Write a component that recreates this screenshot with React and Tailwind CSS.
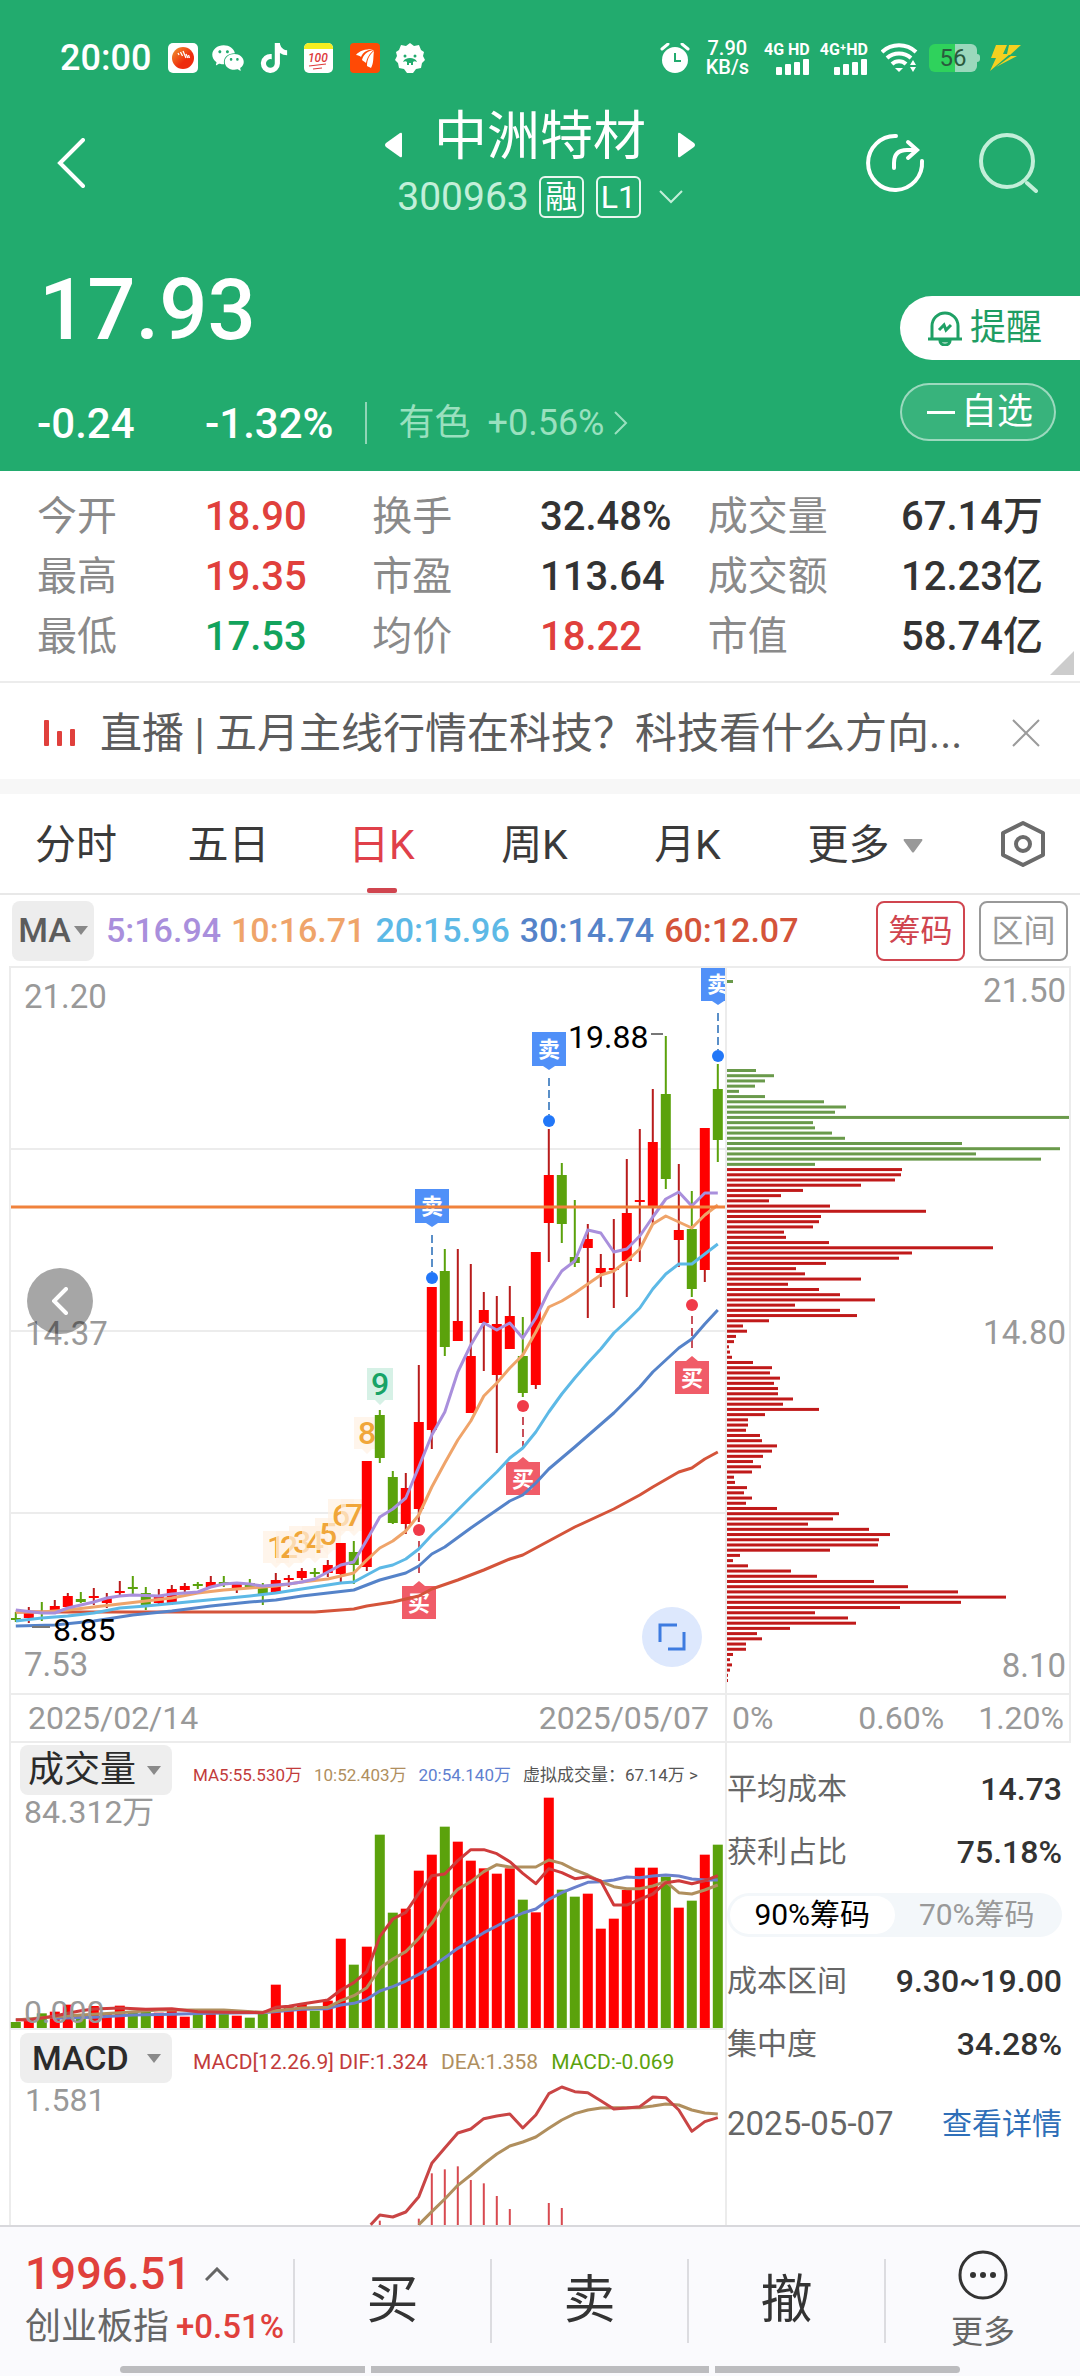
import React, { useState } from "react";
import { AiFillWechat } from "react-icons/ai";
import { FaTiktok } from "react-icons/fa";

const RED = "#ff0000";
const GREEN = "#5ba20c";

// horizontal position of the i-th trading day
const dayX = (i) => 15.8 + i * 13;

// [up, bodyTop, bodyBottom, wickTop, wickBottom]
const candles = [
  [0, 1618, 1620, 1612, 1622],
  [1, 1612, 1618, 1607, 1623],
  [0, 1612, 1614, 1602, 1621],
  [1, 1606, 1613, 1600, 1613],
  [1, 1596, 1607, 1593, 1608],
  [0, 1599, 1602, 1592, 1603],
  [1, 1596, 1598, 1588, 1605],
  [1, 1598, 1603, 1593, 1608],
  [1, 1591, 1593, 1581, 1595],
  [0, 1587, 1589, 1576, 1595],
  [0, 1593, 1605, 1587, 1610],
  [1, 1595, 1603, 1589, 1605],
  [1, 1589, 1603, 1585, 1605],
  [1, 1586, 1590, 1583, 1592],
  [0, 1584, 1586, 1582, 1589],
  [1, 1582, 1587, 1576, 1587],
  [0, 1582, 1584, 1576, 1587],
  [1, 1584, 1589, 1583, 1593],
  [0, 1583, 1587, 1579, 1588],
  [0, 1588, 1594, 1583, 1605],
  [1, 1580, 1592, 1573, 1593],
  [1, 1578, 1580, 1575, 1587],
  [1, 1571, 1578, 1568, 1580],
  [0, 1572, 1574, 1568, 1577],
  [1, 1565, 1573, 1560, 1577],
  [1, 1543, 1574, 1543, 1582],
  [0, 1552, 1565, 1541, 1584],
  [1, 1461, 1567, 1461, 1571],
  [0, 1415, 1458, 1410, 1463],
  [0, 1477, 1523, 1471, 1524],
  [1, 1488, 1524, 1473, 1534],
  [1, 1422, 1509, 1365, 1522],
  [1, 1287, 1430, 1287, 1449],
  [0, 1271, 1347, 1249, 1356],
  [1, 1321, 1341, 1249, 1341],
  [1, 1356, 1413, 1264, 1413],
  [1, 1310, 1323, 1292, 1371],
  [1, 1324, 1375, 1296, 1453],
  [1, 1316, 1349, 1286, 1349],
  [0, 1356, 1393, 1317, 1397],
  [1, 1252, 1385, 1252, 1389],
  [1, 1175, 1223, 1129, 1262],
  [0, 1175, 1224, 1163, 1243],
  [0, 1257, 1263, 1200, 1267],
  [1, 1239, 1248, 1224, 1318],
  [1, 1268, 1273, 1254, 1287],
  [1, 1268, 1270, 1219, 1308],
  [1, 1213, 1261, 1159, 1297],
  [1, 1200, 1202, 1129, 1262],
  [1, 1142, 1206, 1089, 1225],
  [0, 1094, 1179, 1036, 1189],
  [1, 1230, 1240, 1164, 1267],
  [0, 1229, 1289, 1191, 1297],
  [1, 1128, 1270, 1128, 1282],
  [0, 1089, 1140, 1064, 1162],
];

// moving averages, [day, y] pairs
const priceLines = [
  {
    color: "#d4543a",
    pts: [[0, 1612], [23, 1612], [24, 1611], [26, 1609], [27, 1606], [29, 1602], [31, 1596], [32, 1589], [34, 1580], [36, 1570], [38, 1559], [39, 1555], [41, 1541], [43, 1527], [46, 1509], [48, 1495], [49, 1487], [51, 1472], [52, 1468], [53, 1459], [54, 1452]],
  },
  {
    color: "#5583c9",
    pts: [[0, 1626], [3, 1625], [6, 1621], [9, 1615], [12, 1611], [15, 1606], [18, 1602], [20, 1600], [22, 1596], [24, 1593], [26, 1590], [27, 1585], [28, 1580], [30, 1573], [31, 1566], [32, 1554], [33, 1547], [35, 1528], [37, 1510], [38, 1501], [39, 1495], [40, 1483], [41, 1469], [43, 1447], [46, 1413], [48, 1387], [49, 1372], [51, 1348], [52, 1339], [53, 1324], [54, 1310]],
  },
  {
    color: "#5db9e6",
    pts: [[0, 1621], [2, 1618], [4, 1616], [6, 1613], [8, 1608], [10, 1606], [14, 1601], [18, 1596], [20, 1593], [22, 1589], [24, 1585], [25, 1583], [26, 1582], [27, 1575], [28, 1568], [29, 1565], [30, 1559], [31, 1549], [32, 1535], [33, 1523], [35, 1497], [37, 1472], [38, 1458], [39, 1448], [40, 1432], [41, 1412], [42, 1394], [43, 1378], [44, 1363], [45, 1349], [46, 1333], [47, 1321], [48, 1308], [49, 1289], [50, 1274], [51, 1264], [52, 1264], [53, 1254], [54, 1244]],
  },
  {
    color: "#efa46a",
    pts: [[0, 1612], [2, 1612], [4, 1610], [6, 1607], [8, 1604], [10, 1601], [12, 1598], [14, 1593], [16, 1590], [18, 1588], [20, 1586], [22, 1582], [24, 1579], [25, 1576], [26, 1573], [27, 1560], [28, 1548], [29, 1541], [30, 1531], [31, 1515], [32, 1487], [33, 1463], [34, 1440], [35, 1421], [36, 1396], [37, 1383], [38, 1368], [39, 1355], [40, 1332], [41, 1307], [42, 1301], [43, 1293], [44, 1284], [45, 1275], [46, 1271], [47, 1261], [48, 1249], [49, 1224], [50, 1216], [51, 1222], [52, 1228], [53, 1215], [54, 1205]],
  },
  {
    color: "#a98fdc",
    pts: [[0, 1610], [2, 1613], [3, 1613], [4, 1608], [5, 1605], [6, 1602], [7, 1598], [8, 1596], [9, 1595], [11, 1596], [12, 1594], [13, 1593], [14, 1592], [15, 1587], [16, 1584], [17, 1583], [18, 1584], [19, 1586], [20, 1585], [21, 1584], [22, 1582], [23, 1579], [24, 1572], [25, 1565], [26, 1562], [27, 1540], [28, 1517], [29, 1509], [30, 1498], [31, 1467], [32, 1435], [33, 1412], [34, 1372], [35, 1345], [36, 1323], [37, 1330], [38, 1323], [39, 1338], [40, 1318], [41, 1291], [42, 1271], [43, 1261], [44, 1230], [45, 1233], [46, 1252], [47, 1249], [48, 1236], [49, 1217], [50, 1199], [51, 1192], [52, 1206], [53, 1193], [54, 1193]],
  },
];

const sells = [[432, 1278], [549, 1121], [718, 1056]];
const buys = [[419, 1530], [523, 1406], [692, 1305]];

// nine-turn counter, [label, x, top of the tag]
const turns = [
  ["1", 276, 1531],
  ["2", 289, 1531],
  ["3", 302, 1526],
  ["4", 315, 1526],
  ["5", 328, 1518],
  ["6", 341, 1499],
  ["7", 354, 1499],
  ["8", 367, 1417],
];

const chipBars = [
  30, 48, 39, 29, 13, 39, 98, 120, 109, 343, 87, 89, 106, 119, 236, 334, 250,
  315, 89, 176, 175, 169, 135, 77, 55, 43, 104, 200, 95, 93, 87, 58, 60, 103,
  267, 186, 173, 100, 70, 79, 135, 62, 93, 114, 149, 69, 114, 131, 43, 17, 21,
  10, 8, 3, 4, 6, 27, 46, 44, 54, 48, 52, 52, 67, 57, 93, 39, 22, 22, 20, 34,
  36, 51, 46, 37, 27, 35, 26, 8, 9, 21, 18, 26, 20, 51, 113, 107, 82, 143, 164,
  153, 152, 104, 14, 7, 22, 65, 91, 148, 182, 232, 280, 235, 174, 89, 122, 130,
  64, 31, 36, 20, 20, 7, 4, 6, 4, 2, 2,
];

// tops of the volume bars, in thirds of a pixel below the panel's origin
const volumes = [
  876, 866, 850, 845, 824, 858, 828, 850, 827, 846, 846, 848, 842, 860, 852,
  852, 852, 857, 863, 852, 764, 828, 822, 842, 812, 626, 704, 650, 314, 548,
  536, 422, 374, 290, 335, 392, 415, 431, 415, 509, 547, 203, 479, 500, 491,
  596, 566, 480, 413, 413, 440, 533, 512, 374, 344,
];

const volumeLines = [
  {
    color: "#6a80cc",
    pts: [[3, 865], [6, 862], [9, 855], [12, 853], [15, 850], [19, 848], [22, 838], [24, 836], [25, 825], [26, 820], [27, 808], [28, 783], [29, 770], [30, 753], [31, 733], [32, 710], [33, 683], [34, 655], [35, 632], [36, 608], [37, 588], [38, 567], [39, 549], [40, 537], [41, 508], [42, 488], [43, 472], [44, 457], [45, 455], [46, 450], [47, 441], [48, 443], [49, 438], [50, 435], [51, 438], [52, 447], [53, 450], [54, 450]],
  },
  {
    color: "#b08f5e",
    pts: [[0, 870], [3, 860], [5, 855], [8, 848], [11, 840], [16, 840], [19, 847], [20, 842], [21, 838], [22, 834], [24, 832], [25, 812], [26, 797], [27, 773], [28, 715], [29, 687], [30, 665], [31, 625], [32, 580], [33, 520], [34, 478], [35, 455], [36, 425], [37, 404], [38, 411], [40, 411], [41, 390], [42, 400], [43, 420], [44, 435], [45, 455], [46, 470], [47, 476], [48, 476], [49, 468], [50, 455], [51, 488], [52, 492], [53, 480], [54, 465]],
  },
  {
    color: "#cf3b3b",
    pts: [[0, 869], [1, 870], [2, 864], [3, 858], [4, 850], [5, 842], [6, 837], [8, 834], [10, 838], [12, 836], [14, 845], [16, 847], [19, 848], [20, 832], [21, 829], [22, 822], [23, 816], [24, 810], [25, 780], [26, 758], [27, 725], [28, 620], [29, 567], [30, 547], [31, 490], [32, 437], [33, 432], [34, 392], [35, 359], [36, 359], [37, 371], [38, 395], [39, 430], [40, 461], [41, 416], [42, 428], [43, 446], [44, 440], [45, 453], [46, 525], [47, 525], [48, 508], [49, 492], [50, 458], [51, 452], [52, 461], [53, 452], [54, 437]],
  },
];

const macdLines = [
  {
    color: "#b08f5e",
    pts: [[31, 1484], [32, 1445], [33, 1407], [34, 1366], [35, 1335], [36, 1302], [37, 1272], [38, 1248], [39, 1236], [40, 1221], [41, 1195], [42, 1170], [43, 1151], [44, 1140], [45, 1134], [46, 1133], [48, 1133], [49, 1128], [50, 1122], [51, 1125], [52, 1140], [53, 1149], [54, 1152]],
  },
  {
    color: "#c94545",
    pts: [[27.3, 1484], [28, 1455], [29, 1461], [30, 1446], [31, 1400], [32, 1300], [33, 1254], [34, 1209], [35, 1197], [36, 1166], [37, 1158], [38, 1152], [39, 1194], [40, 1155], [41, 1091], [42, 1071], [43, 1085], [44, 1088], [45, 1112], [46, 1137], [47, 1134], [48, 1130], [49, 1101], [50, 1103], [51, 1140], [52, 1204], [53, 1175], [54, 1163]],
  },
];

const macdBars = [[28, 1472], [31, 1466], [32, 1330], [33, 1318], [34, 1309], [35, 1350], [36, 1360], [37, 1398], [38, 1437], [41, 1419], [42, 1434]];

const toPoints = (pts) => pts.map(([i, y]) => `${dayX(i)},${y}`).join(" ");
const toPanelPoints = (pts) =>
  pts.map(([i, y]) => `${dayX(i)},${1730 + y / 3}`).join(" ");

const quote = [
  ["今开", "18.90", "text-[#e0403c]"],
  ["换手", "32.48%", "text-[#333333]"],
  ["成交量", "67.14万", "text-[#333333]"],
  ["最高", "19.35", "text-[#e0403c]"],
  ["市盈", "113.64", "text-[#333333]"],
  ["成交额", "12.23亿", "text-[#333333]"],
  ["最低", "17.53", "text-[#12a35c]"],
  ["均价", "18.22", "text-[#e0403c]"],
  ["市值", "58.74亿", "text-[#333333]"],
];

const Signal = ({ label }) => (
  <div className="flex flex-col items-end text-base leading-[15px] font-bold">
    <span>{label}</span>
    <svg viewBox="0 0 34 16" className="w-[34px] h-[16px] mt-[2px]" fill="#fff">
      <rect x="0" y="8" width="6" height="8" rx="1" />
      <rect x="9" y="5" width="6" height="11" rx="1" />
      <rect x="18" y="3" width="6" height="13" rx="1" />
      <rect x="27" y="0" width="6" height="16" rx="1" />
    </svg>
  </div>
);

const StatusBar = () => (
  <div className="flex items-center justify-between h-[34px] pl-[60px] pr-[58px]">
    <div className="flex items-center">
      <span className="text-4xl leading-[34px] font-medium">20:00</span>
      <svg viewBox="0 0 30 30" className="w-[30px] h-[30px] ml-[17px]">
        <defs>
          <linearGradient id="ball" x1="0" y1="0" x2="1" y2="1">
            <stop offset="0" stopColor="#f09a30" />
            <stop offset="0.6" stopColor="#ee2c0c" />
          </linearGradient>
        </defs>
        <rect width="30" height="30" rx="5" fill="#fff" />
        <circle cx="15" cy="15" r="11" fill="url(#ball)" />
        <path d="M10 10l1 2M12.500 9l2 4M15 8l3 7M18 11l2 4M20.500 12l1 3" stroke="#fff" strokeWidth="1.300" fill="none" />
      </svg>
      <AiFillWechat size={36} className="ml-[12px]" />
      <FaTiktok size={30} className="ml-[13px]" />
      <svg viewBox="0 0 30 30" className="w-[30px] h-[30px] ml-[15px]">
        <rect width="29" height="30" rx="5" fill="#fff" />
        <path d="M0 6V5a5 5 0 0 1 5-5h19a5 5 0 0 1 5 5v1z" fill="#f5ee20" />
        <text x="4" y="19" fontSize="12" fontStyle="italic" fontWeight="500" fill="#dd3a3a">100</text>
        <path d="M5 23l17-2M9 26l9-1" stroke="#dd3a3a" strokeWidth="1.200" />
      </svg>
      <svg viewBox="0 0 30 30" className="w-[30px] h-[30px] ml-[16px]">
        <rect width="30" height="30" rx="4" fill="#ff4a05" />
        <g fill="#fff">
          <path d="M6 12c3-4 9-6 17-6-6 1-10 3-12 8-1-1-3-2-5-2z" />
          <path d="M12 17c1-5 5-9 12-10-5 4-7 8-8 13-1-1-3-2-4-3z" />
          <path d="M17 23c0-6 2-11 7-15-1 6 0 12-3 17-1-1-3-1-4-2z" />
        </g>
      </svg>
      <svg viewBox="0 0 30 30" className="w-[30px] h-[30px] ml-[15px]">
        <path d="M15 0l4 3 5-1 2 5 3 2-1 4 2 4-3 3-1 5-5 1-3 4h-6l-3-4-5-1-1-5-3-3 2-4-1-4 3-2 2-5 5 1z" fill="#fff" />
        <g fill="#22ab6e">
          <circle cx="10" cy="13" r="1.500" />
          <circle cx="20" cy="13" r="1.500" />
          <path d="M8 19c1-3 4-4 7-4s6 1 7 4c-2-1-3-1-4 0v3h-2v-2h-2v2h-2v-3c-1-1-2-1-4 0z" />
        </g>
      </svg>
    </div>
    <div className="flex items-center">
      <svg viewBox="0 0 30 30" className="w-[30px] h-[30px]" fill="none">
        <circle cx="15" cy="17" r="13" fill="#fff" />
        <path d="M2 6l6-5M28 6l-6-5" stroke="#fff" strokeWidth="3" strokeLinecap="round" />
        <path d="M15 10v8h6" stroke="#22ab6e" strokeWidth="2" />
      </svg>
      <div className="ml-[16px] text-center text-xl leading-[19px] font-medium">
        <div>7.90</div>
        <div>KB/s</div>
      </div>
      <div className="flex items-center gap-[10px] ml-[15px]">
        <Signal label="4G HD" />
        <Signal label="4G⁺HD" />
      </div>
      <svg viewBox="0 0 38 30" className="w-[38px] h-[30px] ml-[13px]" fill="none" stroke="#fff" strokeWidth="4">
        <path d="M1 9a25 25 0 0 1 34 0" />
        <path d="M6 15a18 18 0 0 1 24 0" />
        <path d="M11 21a10 10 0 0 1 14 0" />
        <path d="M14 25h8l-4 4z" fill="#fff" stroke="none" />
        <path d="M29 22l3-5 3 5zM29 24l3 5 3-5z" fill="#fff" stroke="none" />
      </svg>
      <div className="flex items-center ml-[10px]">
        <div className="w-[48px] h-[28px] rounded-md bg-linear-to-r from-[#2fd25c] from-55% to-[#9bd8bc] to-55% text-center text-2xl leading-[28px] text-[#2a5a3d]">
          56
        </div>
        <div className="w-[3px] h-[8px] rounded-r bg-[#9bd8bc]" />
      </div>
      <svg viewBox="0 0 32 26" className="w-[32px] h-[26px] ml-[10px]" fill="#f5d020">
        <path d="M6 0h11l-4 9h7L0 26l6-13H1z" />
        <path d="M19 0h12L20 10l-3-1zM21 11h6L6 22z" />
      </svg>
    </div>
  </div>
);

const Header = () => (
  <header className="bg-[#22ab6e] text-white pt-[41px]">
    <StatusBar />
    <div className="grid grid-cols-[1fr_auto_1fr] items-center mt-[28px]">
      <button aria-label="返回" className="justify-self-start pl-[57px]">
        <svg viewBox="0 0 28 50" className="w-[28px] h-[50px]" fill="none" stroke="#fff" strokeWidth="4" strokeLinecap="round">
          <path d="M26 2L3 25l23 23" />
        </svg>
      </button>
      <div className="flex flex-col items-center">
        <div className="flex items-center gap-[32px] h-[68px]">
          <button aria-label="上一只">
            <svg viewBox="0 0 18 26" className="w-[18px] h-[26px] mt-4" fill="#fff">
              <path d="M18 2v22q0 2-2 1L2 15q-2-2 0-4L16 1q2-1 2 1z" />
            </svg>
          </button>
          <h1 className="text-[53px] leading-[68px]">中洲特材</h1>
          <button aria-label="下一只">
            <svg viewBox="0 0 18 26" className="w-[18px] h-[26px] mt-4" fill="#fff">
              <path d="M0 2v22q0 2 2 1l14-10q2-2 0-4L2 1Q0 0 0 2z" />
            </svg>
          </button>
        </div>
        <div className="flex items-center h-[52px] text-[39px]">
          <span className="text-[#c2efd9]">300963</span>
          <span className="ml-[10px] w-[45px] h-[42px] rounded-md border-2 border-white/90 text-center text-[32px] leading-[38px]">融</span>
          <span className="ml-[12px] w-[45px] h-[42px] rounded-md border-2 border-white/90 text-center text-[32px] leading-[38px]">L1</span>
          <svg viewBox="0 0 24 14" className="w-[24px] h-[14px] ml-[18px]" fill="none" stroke="#c2efd9" strokeWidth="2">
            <path d="M1 1l11 11L23 1" />
          </svg>
        </div>
      </div>
      <div className="flex items-center justify-end gap-[53px] pr-[42px]">
        <button aria-label="分享">
          <svg viewBox="0 0 60 60" className="w-[60px] h-[60px]" fill="none" stroke="#fff" strokeWidth="4" strokeLinecap="round">
            <path d="M31 3A27 27 0 1 0 57 28" />
            <path d="M29 35V30q0-13 13-13h9M43 9l9 8-9 8" />
          </svg>
        </button>
        <button aria-label="搜索">
          <svg viewBox="0 0 60 60" className="w-[60px] h-[60px]" fill="none" stroke="#c2efd9" strokeWidth="4" strokeLinecap="round">
            <circle cx="29" cy="28" r="26" />
            <path d="M49 50l9 8" />
          </svg>
        </button>
      </div>
    </div>
    <div className="flex justify-between mt-[32px] pb-[19px]">
      <div>
        <div className="pl-[39px] text-[85px] leading-[110px] font-medium">17.93</div>
        <div className="flex items-center h-[58px] mt-[29px] pl-[37px] text-[42px]">
          <span className="w-[168px] font-medium">-0.24</span>
          <span className="font-medium">-1.32%</span>
          <span className="w-[2px] h-[42px] ml-[32px] bg-white/50" />
          <a href="#sector" className="flex items-center ml-[31px] text-4xl text-[#9ae0bf]">
            有色
            <span className="ml-[17px]">+0.56%</span>
            <svg viewBox="0 0 14 24" className="w-[14px] h-[24px] ml-[10px]" fill="none" stroke="#9ae0bf" strokeWidth="2">
              <path d="M1 1l11 11L1 23" />
            </svg>
          </a>
        </div>
      </div>
      <div className="flex flex-col items-start mt-[41px]">
        <button className="flex items-center w-[180px] h-[64px] pl-[27px] gap-[7px] rounded-l-full bg-white text-[#1f9d63] text-4xl">
          <svg viewBox="0 0 36 36" className="w-[36px] h-[36px]" fill="none" stroke="#1fa065" strokeWidth="3">
            <path d="M5 29V16a13 13 0 0 1 26 0v13M1 29h34" />
            <path d="M13 31a5 4 0 0 0 10 0z" />
            <path d="M12 20l5-5 2 5 5-5" />
          </svg>
          提醒
        </button>
        <button className="flex items-center w-[156px] h-[58px] mt-[23px] pl-[25px] gap-[6px] rounded-full border-2 border-white/50 bg-white/10 text-4xl">
          <span className="w-[28px] h-[3px] bg-white" />
          自选
        </button>
      </div>
    </div>
  </header>
);

const QuoteTable = () => (
  <section className="relative border-b-2 border-[#ececec] pt-[16px] pb-[14px]">
    <dl className="grid grid-cols-3 px-[37px] text-[40px] leading-[60px]">
      {quote.map(([label, value, color], i) => (
        <div key={label} className={i % 3 === 2 ? "flex justify-between" : "flex"}>
          <dt className={i % 3 === 2 ? "text-[#8a8a8a]" : "w-1/2 text-[#8a8a8a]"}>{label}</dt>
          <dd className={`${color} font-medium`}>{value}</dd>
        </div>
      ))}
    </dl>
    <svg viewBox="0 0 24 24" className="absolute right-[6px] bottom-[6px] w-[24px] h-[24px]" fill="#cccccc">
      <path d="M24 0v24H0z" />
    </svg>
  </section>
);

const News = () => (
  <section className="flex items-center h-[96px] pl-[44px] pr-[40px] pt-[4px]">
    <svg viewBox="0 0 32 26" className="w-[32px] h-[26px] shrink-0" fill="#e0403c">
      <rect x="0" y="0" width="5" height="26" rx="1" />
      <rect x="13" y="11" width="5" height="15" rx="1" />
      <rect x="26" y="9" width="5" height="17" rx="1" />
    </svg>
    <a href="#live" className="ml-[24px] flex-1 truncate text-[42px] text-[#5c5c5c]">
      直播 | 五月主线行情在科技？科技看什么方向...
    </a>
    <button aria-label="关闭">
      <svg viewBox="0 0 28 28" className="w-[28px] h-[28px]" stroke="#9b9b9b" strokeWidth="2">
        <path d="M1 1l26 26M27 1L1 27" />
      </svg>
    </button>
  </section>
);

const Tabs = () => {
  const [active, setActive] = useState("日K");

  return (
    <nav className="grid grid-cols-[152fr_153fr_153fr_153fr_153fr_202fr_114fr] h-[101px] border-b-2 border-[#e8e8e8] text-[41px] text-[#3a3a3a]">
      {["分时", "五日", "日K", "周K", "月K"].map((tab) => (
        <button
          key={tab}
          onClick={() => setActive(tab)}
          className={`relative pt-[4px] ${tab === active ? "text-[#e0404a]" : ""}`}
        >
          {tab}
          {tab === active && (
            <span className="absolute bottom-0 left-1/2 -ml-[15px] w-[30px] h-[5px] rounded-xs bg-[#d0454f]" />
          )}
        </button>
      ))}
      <button className="flex items-center justify-center gap-[13px] pt-[4px]">
        更多
        <svg viewBox="0 0 20 14" className="w-[20px] h-[14px]" fill="#999999">
          <path d="M1 0h18q1 1 0 2l-8 11q-1 1-2 0L1 2Q0 1 1 0z" />
        </svg>
      </button>
      <button aria-label="设置" className="flex items-center justify-center">
        <svg viewBox="0 0 46 48" className="w-[46px] h-[48px]" fill="none" stroke="#6b6b6b" strokeWidth="4" strokeLinejoin="round">
          <path d="M23 3l20 10v22L23 45 3 35V13z" />
          <circle cx="23" cy="24" r="7" />
        </svg>
      </button>
    </nav>
  );
};

const Legend = () => (
  <div className="flex items-center h-[71px] px-[12px]">
    <button className="flex items-center justify-center gap-[3px] w-[82px] h-[60px] rounded-lg bg-[#ededed] text-[34px] font-medium text-[#5c5c5c]">
      MA
      <svg viewBox="0 0 14 9" className="w-[14px] h-[9px]" fill="#888888">
        <path d="M0 0h14L7 9z" />
      </svg>
    </button>
    <div className="flex gap-[10px] ml-[12px] text-[34px] font-medium">
      <span className="text-[#a98fdc]">5:16.94</span>
      <span className="text-[#efa46a]">10:16.71</span>
      <span className="text-[#5db9e6]">20:15.96</span>
      <span className="text-[#5583c9]">30:14.74</span>
      <span className="text-[#d4543a]">60:12.07</span>
    </div>
    <button className="ml-auto w-[89px] h-[60px] rounded-lg border-2 border-[#d0454f] text-[32px] text-[#d0454f]">筹码</button>
    <button className="ml-[14px] w-[89px] h-[60px] rounded-lg border-2 border-[#999999] text-[32px] text-[#999999]">区间</button>
  </div>
);

const Sell = ({ x, y }) => (
  <g>
    <path d={`M${x} ${y - 43}V${y - 6}`} stroke="#5a8fc8" strokeWidth="2" strokeDasharray="8 4" />
    <circle cx={x} cy={y} r="6" fill="#2277f8" />
    <path d={`M${x - 17} ${y - 89}h34v34h-11l-6 4-6-4h-11z`} fill="#5090f8" />
    <text x={x} y={y - 64} textAnchor="middle" fontSize="22" fontWeight="700" fill="#fff">卖</text>
  </g>
);

const Buy = ({ x, y }) => (
  <g>
    <path d={`M${x} ${y + 11}v36`} stroke="#c8505a" strokeWidth="2" strokeDasharray="8 4" />
    <circle cx={x} cy={y} r="6" fill="#f03a48" />
    <path d={`M${x - 17} ${y + 56}h11l6-5 6 5h11v33h-34z`} fill="#f05c68" />
    <text x={x} y={y + 81} textAnchor="middle" fontSize="22" fontWeight="700" fill="#fff">买</text>
  </g>
);

const PriceChart = () => (
  <div className="relative border-b-2 border-[#ececec]">
    <svg viewBox="11 968 714 725" className="block w-full">
      <path d="M11 1149H725M11 1331H725M11 1513H725" stroke="#ececec" strokeWidth="2" />
      {turns.map(([label, x, y]) => (
        <g key={label}>
          <path d={`M${x - 13} ${y}h26v32h-8l-5 5-5-5h-8z`} fill="#fff1e3" fillOpacity="0.7" />
          <text x={x} y={y + 27} textAnchor="middle" fontSize="32" fontWeight="500" fill="#f0a63a">{label}</text>
        </g>
      ))}
      <path d="M367 1368h26v32h-8l-5 5-5-5h-8z" fill="#d6f1e6" />
      <text x="380" y="1395" textAnchor="middle" fontSize="32" fontWeight="500" fill="#18a366">9</text>
      {candles.map(([up, top, bottom, high, low], i) => (
        <g key={i} fill={up ? RED : GREEN}>
          <rect x={dayX(i) - 1} y={high} width="2" height={low - high} fill={up ? "#b81c1c" : GREEN} />
          <rect x={dayX(i) - 5} y={top} width="10" height={bottom - top} />
        </g>
      ))}
      {sells.map(([x, y]) => <Sell key={x} x={x} y={y} />)}
      {buys.map(([x, y]) => <Buy key={x} x={x} y={y} />)}
      {priceLines.map(({ color, pts }) => (
        <polyline key={color} points={toPoints(pts)} fill="none" stroke={color} strokeWidth="3" strokeLinejoin="round" />
      ))}
      <path d="M11 1207H725" stroke="#f0823c" strokeWidth="3" />
      <path d="M651 1034h12M32 1627h18" stroke="#777" strokeWidth="2" />
      <g fontSize="33" fill="#999999">
        <text x="24" y="1008">21.20</text>
        <text x="25" y="1345">14.37</text>
        <text x="24" y="1676">7.53</text>
      </g>
      <g fontSize="32" fill="#000">
        <text x="568" y="1048">19.88</text>
        <text x="53" y="1641">8.85</text>
      </g>
    </svg>
    <button aria-label="向前" className="absolute top-[46%] left-[2.3%] -mt-[34px] flex items-center justify-center w-[66px] h-[66px] rounded-full bg-black/35">
      <svg viewBox="0 0 16 28" className="w-[16px] h-[28px]" fill="none" stroke="#fff" strokeWidth="4" strokeLinecap="round">
        <path d="M14 2L2 14l12 12" />
      </svg>
    </button>
    <button aria-label="全屏" className="absolute right-[3.2%] bottom-[3.6%] flex items-center justify-center w-[60px] h-[60px] rounded-full bg-[#dde8fd]">
      <svg viewBox="0 0 28 28" className="w-[28px] h-[28px]" fill="none" stroke="#3d7be0" strokeWidth="3">
        <path d="M2 19V2h17M10 26h16V9" />
      </svg>
    </button>
  </div>
);

const ChipChart = () => (
  <svg viewBox="727 968 342 725" preserveAspectRatio="none" className="block w-full">
    <rect x="727" y="980" width="6" height="3" fill="#6a9a4b" />
    {chipBars.map((w, i) => (
      <rect key={i} x="727" y={1069 + i * 5.214} width={w - 1} height="3" fill={i < 19 ? "#6a9a4b" : "#c01a1a"} />
    ))}
    <g fontSize="33" fill="#999999" textAnchor="end">
      <text x="1066" y="1002">21.50</text>
      <text x="1066" y="1344">14.80</text>
      <text x="1066" y="1677">8.10</text>
    </g>
  </svg>
);

const PanelButton = ({ children }) => (
  <button className="flex items-center justify-between w-[152px] h-[50px] pl-[8px] pr-[11px] rounded-lg bg-[#eeeeee] text-[#2b2b2b]">
    {children}
    <svg viewBox="0 0 14 9" className="w-[14px] h-[9px]" fill="#8a8a8a">
      <path d="M0 0h14L7 9z" />
    </svg>
  </button>
);

const VolumePanel = () => (
  <section>
    <div className="flex items-center h-[54px] pl-[9px]">
      <PanelButton>
        <span className="text-4xl leading-[50px]">成交量</span>
      </PanelButton>
      <div className="flex items-center gap-[12px] ml-[21px] pt-[12px] text-[17px] whitespace-nowrap">
        <span className="text-[#c23b3b]">MA5:55.530万</span>
        <span className="text-[#b08f5e]">10:52.403万</span>
        <span className="text-[#5f7fd0]">20:54.140万</span>
        <a href="#volume" className="text-[#555555]">虚拟成交量：67.14万 &gt;</a>
      </div>
    </div>
    <svg viewBox="11 1797 714 233" className="block w-full overflow-visible">
      {volumes.map((top, i) => (
        <rect key={i} x={dayX(i) - 5} y={1730 + top / 3} width="10" height={(895 - top) / 3} fill={candles[i][0] ? RED : GREEN} />
      ))}
      {volumeLines.map(({ color, pts }) => (
        <polyline key={color} points={toPanelPoints(pts)} fill="none" stroke={color} strokeWidth="3" strokeLinejoin="round" />
      ))}
      <path d="M11 2029H725" stroke="#ececec" strokeWidth="2" />
      <g fontSize="32" fill="#999999">
        <text x="24" y="1823">84.312万</text>
        <text x="24" y="2023">0.000</text>
      </g>
    </svg>
  </section>
);

const MacdPanel = () => (
  <section>
    <div className="flex items-center h-[56px] pl-[9px]">
      <PanelButton>
        <span className="pl-[4px] text-[34px] leading-[50px] font-medium">MACD</span>
      </PanelButton>
      <div className="flex items-center gap-[13px] ml-[21px] pt-[10px] text-[21px] whitespace-nowrap">
        <span className="text-[#c23b3b]">MACD[12.26.9] DIF:1.324</span>
        <span className="text-[#b08f5e]">DEA:1.358</span>
        <span className="text-[#5ba20c]">MACD:-0.069</span>
      </div>
    </div>
    <svg viewBox="11 2086 714 139" className="block w-full overflow-visible">
      {macdBars.map(([i, top]) => (
        <rect key={i} x={dayX(i) - 1} y={1730 + top / 3} width="2" height={2225 - (1730 + top / 3)} fill="#d84a50" />
      ))}
      {macdLines.map(({ color, pts }) => (
        <polyline key={color} points={toPanelPoints(pts)} fill="none" stroke={color} strokeWidth="3" strokeLinejoin="round" />
      ))}
      <text x="25" y="2111" fontSize="32" fill="#999999">1.581</text>
    </svg>
  </section>
);

const ChipRow = ({ label, value }) => (
  <div className="flex items-center justify-between h-[63px]">
    <dt className="text-3xl text-[#666666]">{label}</dt>
    <dd className="text-[32px] font-medium text-[#333333]">{value}</dd>
  </div>
);

const ChipInfo = () => {
  const [range, setRange] = useState("90%筹码");

  return (
    <section className="pt-[14px] pr-[9px]">
      <dl>
        <ChipRow label="平均成本" value="14.73" />
        <ChipRow label="获利占比" value="75.18%" />
      </dl>
      <div className="flex h-[44px] mt-[10px] mb-[12px] p-[3px] rounded-full bg-[#f3f7fa]">
        {["90%筹码", "70%筹码"].map((item) => (
          <button
            key={item}
            onClick={() => setRange(item)}
            className={`flex-1 rounded-full text-3xl leading-[38px] ${
              item === range ? "bg-white text-black" : "text-[#999999]"
            }`}
          >
            {item}
          </button>
        ))}
      </div>
      <dl>
        <ChipRow label="成本区间" value="9.30~19.00" />
        <ChipRow label="集中度" value="34.28%" />
      </dl>
      <div className="flex items-center justify-between h-[63px] mt-[17px]">
        <span className="text-[33px] text-[#666666]">2025-05-07</span>
        <a href="#detail" className="text-3xl text-[#2f6fb8]">查看详情</a>
      </div>
    </section>
  );
};

const BottomBar = () => (
  <footer className="border-t-2 border-[#d8d8dc] bg-[#fafafd]">
    <div className="grid grid-cols-[295fr_197fr_197fr_197fr_194fr] items-center h-[139px] pt-[9px]">
      <a href="#index" className="block pl-[25px] border-r-2 border-[#dcdce0] h-[84px]">
        <div className="flex items-center text-[45px] leading-[30px] font-medium text-[#e0403c]">
          1996.51
          <svg viewBox="0 0 24 14" className="w-[24px] h-[14px] ml-[14px]" fill="none" stroke="#666666" strokeWidth="3">
            <path d="M1 13L12 2l11 11" />
          </svg>
        </div>
        <div className="flex items-center mt-[20px] text-[36px] leading-[36px] text-[#666666] whitespace-nowrap">
          创业板指
          <span className="ml-[7px] text-[33px] font-medium text-[#e0403c]">+0.51%</span>
        </div>
      </a>
      <button className="h-[84px] border-r-2 border-[#dcdce0] text-[52px] leading-[84px] text-[#333333]">买</button>
      <button className="h-[84px] border-r-2 border-[#dcdce0] text-[52px] leading-[84px] text-[#333333]">卖</button>
      <button className="h-[84px] border-r-2 border-[#dcdce0] text-[52px] leading-[84px] text-[#333333]">撤</button>
      <button className="flex flex-col items-center text-[32px] leading-[40px] text-[#666666]">
        <svg viewBox="0 0 50 50" className="w-[50px] h-[50px] mb-[12px]" fill="none" stroke="#333333" strokeWidth="3">
          <circle cx="25" cy="25" r="23" />
          <g fill="#333333" stroke="none">
            <circle cx="15" cy="25" r="3" />
            <circle cx="25" cy="25" r="3" />
            <circle cx="35" cy="25" r="3" />
          </g>
        </svg>
        更多
      </button>
    </div>
    <div className="grid grid-cols-[245fr_338fr_245fr] gap-[6px] px-[120px] pb-[3px]">
      <span className="h-[7px] rounded-l-full bg-[#bcbcbf]" />
      <span className="h-[7px] bg-[#bcbcbf]" />
      <span className="h-[7px] rounded-r-full bg-[#bcbcbf]" />
    </div>
  </footer>
);

const App = () => {
  return (
    <div className="bg-white font-['Roboto','Noto_Sans_CJK_SC',sans-serif]">
      <Header />
      <QuoteTable />
      <News />
      <div className="h-[15px] bg-[#f7f7f7]" />
      <Tabs />
      <Legend />

      <main className="grid grid-cols-[716fr_346fr] px-[9px]">
        {/* K line, volume and MACD */}
        <div className="border-l-2 border-t-2 border-[#ececec]">
          <PriceChart />
          <div className="flex items-center justify-between h-[48px] pl-[17px] pr-[16px] border-b-2 border-[#ececec] text-[32px] text-[#999999]">
            <span>2025/02/14</span>
            <span>2025/05/07</span>
          </div>
          <VolumePanel />
          <MacdPanel />
        </div>

        {/* Chip distribution */}
        <div className="border-l-2 border-t-2 border-[#ececec]">
          <div className="border-r-2 border-[#ececec]">
            <ChipChart />
            <div className="flex items-center justify-between h-[50px] px-[5px] border-y-2 border-[#ececec] text-[32px] text-[#999999]">
              <span className="flex-1">0%</span>
              <span className="mr-[34px]">0.60%</span>
              <span>1.20%</span>
            </div>
          </div>
          <ChipInfo />
        </div>
      </main>

      <BottomBar />
    </div>
  );
};

export default App;
